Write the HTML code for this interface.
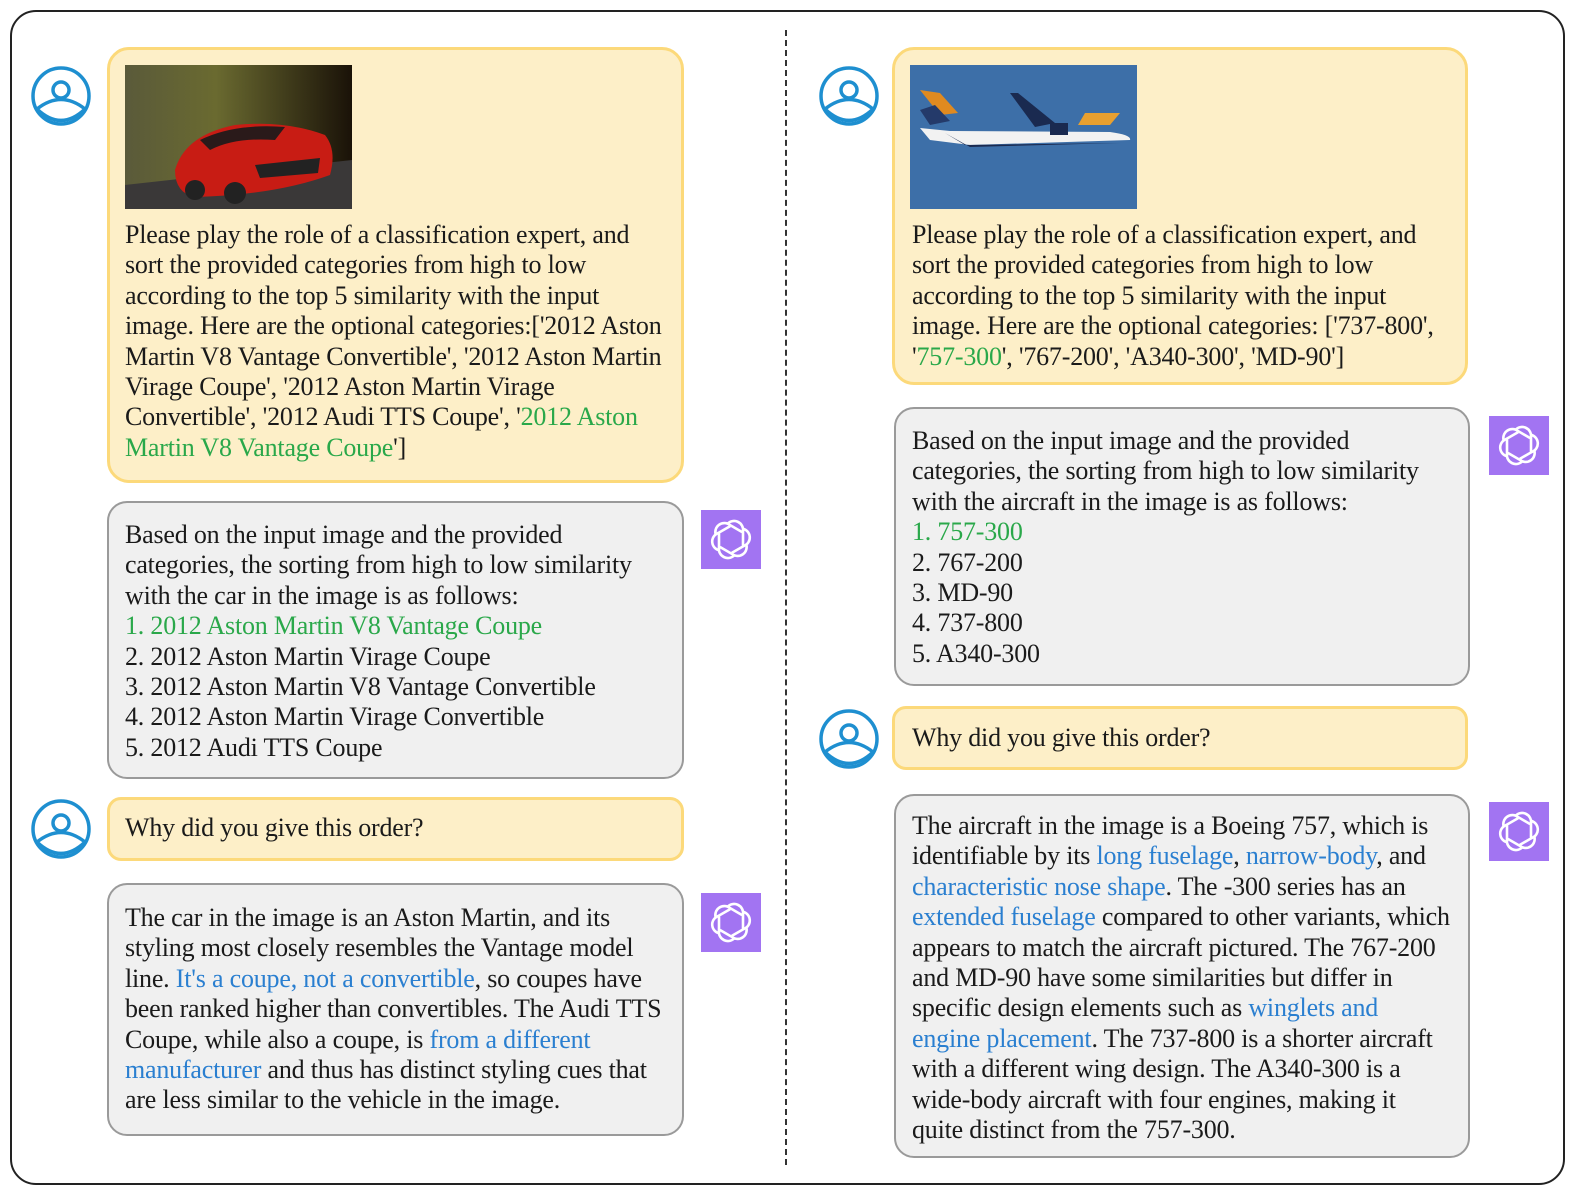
<!DOCTYPE html>
<html style="overflow:hidden"><head><meta charset="utf-8"><style>
html,body{margin:0;width:1575px;height:1195px;overflow:hidden}
body{background:#fff;position:relative;font-family:"Liberation Serif",serif;color:#1a1a1a}
.a{position:absolute}
.frame{left:10px;top:10px;width:1551px;height:1171px;border:2px solid #222;border-radius:26px;box-sizing:content-box}
.dash{left:785px;top:30px;height:1135px;border-left:2px dashed #333}
.y{background:#fdefc8;border:3px solid #fcd97a;border-radius:22px;box-sizing:border-box}
.g{background:#f0f0f0;border:2.5px solid #9a9a9a;border-radius:20px;box-sizing:border-box}
.t{font-size:26px;line-height:30.4px;white-space:nowrap;letter-spacing:-0.2px}
.gr{color:#2aa84a}.bl{color:#2a7fd0}
.gpt{width:60px;height:59px;background:#a274f2}
</style></head><body>
<div class="a frame"></div>
<div class="a dash"></div>

<svg width="0" height="0" style="position:absolute;left:0;top:0"><defs>
<g id="user"><circle cx="0" cy="0" r="28" fill="none" stroke="#1e8fd0" stroke-width="3.5"/><circle cx="0" cy="-6" r="8" fill="none" stroke="#1e8fd0" stroke-width="3.5"/><path d="M-24,13 Q0,-6 24,13 Q0,36 -24,13Z" fill="none" stroke="#1e8fd0" stroke-width="3.5"/></g>
<g id="logo" fill="none" stroke="#fff" stroke-width="2.6">
<path d="M-4,-15 A9,9 0 0 1 12,-8 L12,6" transform="rotate(0)"/>
<path d="M-4,-15 A9,9 0 0 1 12,-8 L12,6" transform="rotate(60)"/>
<path d="M-4,-15 A9,9 0 0 1 12,-8 L12,6" transform="rotate(120)"/>
<path d="M-4,-15 A9,9 0 0 1 12,-8 L12,6" transform="rotate(180)"/>
<path d="M-4,-15 A9,9 0 0 1 12,-8 L12,6" transform="rotate(240)"/>
<path d="M-4,-15 A9,9 0 0 1 12,-8 L12,6" transform="rotate(300)"/>
</g></defs></svg>

<svg class="a" style="left:30px;top:65px" width="62" height="62"><use href="#user" x="31" y="31"/></svg>
<svg class="a" style="left:30px;top:798px" width="62" height="62"><use href="#user" x="31" y="31"/></svg>
<svg class="a" style="left:818px;top:65px" width="62" height="62"><use href="#user" x="31" y="31"/></svg>
<svg class="a" style="left:818px;top:708px" width="62" height="62"><use href="#user" x="31" y="31"/></svg>

<svg class="a gpt" style="left:701px;top:510px" width="60" height="59"><use href="#logo" x="30" y="29.5"/></svg>
<svg class="a gpt" style="left:701px;top:893px" width="60" height="59"><use href="#logo" x="30" y="29.5"/></svg>
<svg class="a gpt" style="left:1489px;top:416px" width="60" height="59"><use href="#logo" x="30" y="29.5"/></svg>
<svg class="a gpt" style="left:1489px;top:802px" width="60" height="59"><use href="#logo" x="30" y="29.5"/></svg>

<!-- Left -->
<div class="a y" style="left:107px;top:47px;width:577px;height:436px"></div>
<svg class="a" style="left:125px;top:65px" width="227" height="144">
<defs><linearGradient id="bg1" x1="0" y1="0" x2="1" y2="0"><stop offset="0" stop-color="#5a5a3a"/><stop offset=".4" stop-color="#6a6a30"/><stop offset="1" stop-color="#1a1208"/></linearGradient></defs>
<rect width="227" height="144" fill="url(#bg1)"/>
<path d="M0,120 L227,95 L227,144 L0,144Z" fill="#3a3838"/>
<path d="M50,105 Q60,70 110,60 Q160,55 200,70 Q212,85 205,110 Q150,130 70,132 Q50,128 50,105Z" fill="#c81c14"/>
<path d="M75,75 Q110,58 160,62 L150,75 Q110,72 85,85Z" fill="#2a1a1a"/>
<path d="M130,100 L195,93 L193,108 L135,113Z" fill="#222"/>
<circle cx="70" cy="125" r="10" fill="#222"/><circle cx="110" cy="128" r="11" fill="#222"/>
</svg>
<div class="a t" style="left:125px;top:220px">Please play the role of a classification expert, and<br>sort the provided categories from high to low<br>according to the top 5 similarity with the input<br>image. Here are the optional categories:['2012 Aston<br>Martin V8 Vantage Convertible', '2012 Aston Martin<br>Virage Coupe', '2012 Aston Martin Virage<br>Convertible', '2012 Audi TTS Coupe', '<span class="gr">2012 Aston</span><br><span class="gr">Martin V8 Vantage Coupe</span>']</div>

<div class="a g" style="left:107px;top:501px;width:577px;height:278px"></div>
<div class="a t" style="left:125px;top:520px">Based on the input image and the provided<br>categories, the sorting from high to low similarity<br>with the car in the image is as follows:<br><span class="gr">1. 2012 Aston Martin V8 Vantage Coupe</span><br>2. 2012 Aston Martin Virage Coupe<br>3. 2012 Aston Martin V8 Vantage Convertible<br>4. 2012 Aston Martin Virage Convertible<br>5. 2012 Audi TTS Coupe</div>

<div class="a y" style="left:107px;top:797px;width:577px;height:64px;border-radius:14px"></div>
<div class="a t" style="left:125px;top:813px">Why did you give this order?</div>

<div class="a g" style="left:107px;top:883px;width:577px;height:253px"></div>
<div class="a t" style="left:125px;top:903px">The car in the image is an Aston Martin, and its<br>styling most closely resembles the Vantage model<br>line. <span class="bl">It's a coupe, not a convertible</span>, so coupes have<br>been ranked higher than convertibles. The Audi TTS<br>Coupe, while also a coupe, is <span class="bl">from a different</span><br><span class="bl">manufacturer</span> and thus has distinct styling cues that<br>are less similar to the vehicle in the image.</div>

<!-- Right -->
<div class="a y" style="left:892px;top:47px;width:576px;height:338px"></div>
<svg class="a" style="left:910px;top:65px" width="227" height="144">
<rect width="227" height="144" fill="#3d6fa8"/>
<path d="M10,63 L40,66 L200,67 Q222,70 220,75 L60,80 L20,75Z" fill="#f2f2f2"/>
<path d="M35,68 L55,80 L210,78 L60,82Z" fill="#1a2a50"/>
<path d="M10,25 L30,28 L48,48 L30,50Z" fill="#e08a20"/>
<path d="M10,45 L25,40 L40,56 L20,60Z" fill="#243a6a"/>
<path d="M100,28 L108,28 L145,58 L125,62Z" fill="#1a2a50"/>
<path d="M140,58 L158,58 L158,70 L140,70Z" fill="#1a2a50"/>
<path d="M175,48 L210,48 L200,60 L168,60Z" fill="#e8a030"/>
</svg>
<div class="a t" style="left:912px;top:220px">Please play the role of a classification expert, and<br>sort the provided categories from high to low<br>according to the top 5 similarity with the input<br>image. Here are the optional categories: ['737-800',<br>'<span class="gr">757-300</span>', '767-200', 'A340-300', 'MD-90']</div>

<div class="a g" style="left:894px;top:407px;width:576px;height:279px"></div>
<div class="a t" style="left:912px;top:426px">Based on the input image and the provided<br>categories, the sorting from high to low similarity<br>with the aircraft in the image is as follows:<br><span class="gr">1. 757-300</span><br>2. 767-200<br>3. MD-90<br>4. 737-800<br>5. A340-300</div>

<div class="a y" style="left:892px;top:706px;width:576px;height:64px;border-radius:14px"></div>
<div class="a t" style="left:912px;top:723px">Why did you give this order?</div>

<div class="a g" style="left:894px;top:794px;width:576px;height:364px"></div>
<div class="a t" style="left:912px;top:811px">The aircraft in the image is a Boeing 757, which is<br>identifiable by its <span class="bl">long fuselage</span>, <span class="bl">narrow-body</span>, and<br><span class="bl">characteristic nose shape</span>. The -300 series has an<br><span class="bl">extended fuselage</span> compared to other variants, which<br>appears to match the aircraft pictured. The 767-200<br>and MD-90 have some similarities but differ in<br>specific design elements such as <span class="bl">winglets and</span><br><span class="bl">engine placement</span>. The 737-800 is a shorter aircraft<br>with a different wing design. The A340-300 is a<br>wide-body aircraft with four engines, making it<br>quite distinct from the 757-300.</div>
</body></html>
